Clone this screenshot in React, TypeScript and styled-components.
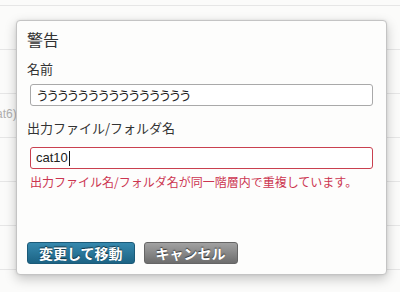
import React from "react";
import styled, { createGlobalStyle } from "styled-components";

const Global = createGlobalStyle`
  html, body { margin: 0; padding: 0; background: #fbfbfa; }
  body { font-family: "Noto Sans CJK JP", "Noto Sans", sans-serif; }
`;

const Page = styled.div`
  position: relative;
  width: 400px;
  height: 292px;
  overflow: hidden;
  background: #fbfbfa;
`;

const TopStrip = styled.div`
  height: 5px;
  border-bottom: 1px solid #e6e6e6;
`;

const Row = styled.div`
  height: 43px;
  border-bottom: 1px solid #e6e6e6;
  display: flex;
  align-items: center;
`;

const RowText = styled.span`
  margin-left: -14px;
  margin-top: -4px;
  font-family: "Liberation Sans", Arial, sans-serif;
  font-size: 12px;
  color: #b0b0b0;
`;

const Dialog = styled.div`
  position: absolute;
  left: 16px;
  top: 20px;
  width: 371px;
  height: 255px;
  box-sizing: border-box;
  background: #fdfdfc;
  border: 1px solid #c4c4c4;
  border-radius: 4px;
  box-shadow: 0 4px 12px rgba(0, 0, 0, 0.22), 0 0 3px rgba(0, 0, 0, 0.08);
  padding: 8px 13px 10px 10px;
  display: flex;
  flex-direction: column;
`;

const Title = styled.div`
  font-size: 16px;
  line-height: 20px;
  color: #333;
  margin-bottom: 11px;
`;

const Label = styled.div`
  font-size: 13px;
  line-height: 18px;
  color: #333;
`;

const Field = styled.div<{ $error?: boolean }>`
  box-sizing: border-box;
  margin: ${(p) => (p.$error ? "10px" : "6px")} 0 0 3px;
  width: 343px;
  height: 22px;
  border: 1px solid ${(p) => (p.$error ? "#c9404f" : "#a9a9a9")};
  border-radius: 3px;
  background: #fff;
  padding: 0 5px;
  display: flex;
  align-items: center;
  font-size: 13px;
  color: #222;
`;

const KanaText = styled.span`
  letter-spacing: -2.8px;
  line-height: 18px;
`;

const LatinText = styled.span`
  font-family: "Liberation Sans", Arial, sans-serif;
  font-size: 13px;
  line-height: 18px;
`;

const Caret = styled.span`
  display: inline-block;
  width: 1px;
  height: 15px;
  margin-left: 1px;
  background: #111;
`;

const SecondLabel = styled(Label)`
  margin-top: 13px;
`;

const ErrorText = styled.div`
  margin: 5px 0 0 3px;
  font-size: 12px;
  line-height: 16px;
  color: #cc3550;
`;

const Buttons = styled.div`
  margin-top: auto;
  display: flex;
  gap: 9px;
`;

const Button = styled.div<{ $variant: "primary" | "secondary" }>`
  box-sizing: border-box;
  height: 22px;
  padding: 0 11px;
  display: flex;
  align-items: center;
  border-radius: 3px;
  font-size: 14px;
  font-weight: 700;
  color: #fff;
  text-shadow: 0 -1px 1px rgba(0, 0, 0, 0.6);
  border: 1px solid ${(p) => (p.$variant === "primary" ? "#1b5a78" : "#656565")};
  background: ${(p) =>
    p.$variant === "primary"
      ? "linear-gradient(#3689ae, #1c6384)"
      : "linear-gradient(#a2a2a2, #6d6d6d)"};
`;

const nameValue = "ううううう" + "ううううう" + "ううううう";

export default function App() {
  return (
    <Page>
      <Global />
      <TopStrip />
      <Row />
      <Row />
      <Row>
        <RowText>(cat6)</RowText>
      </Row>
      <Row />
      <Row />
      <Row />
      <Dialog>
        <Title>警告</Title>
        <Label>名前</Label>
        <Field>
          <KanaText>{nameValue}</KanaText>
        </Field>
        <SecondLabel>出力ファイル/フォルダ名</SecondLabel>
        <Field $error>
          <LatinText>cat10</LatinText>
          <Caret />
        </Field>
        <ErrorText>出力ファイル名/フォルダ名が同一階層内で重複しています。</ErrorText>
        <Buttons>
          <Button $variant="primary">変更して移動</Button>
          <Button $variant="secondary">キャンセル</Button>
        </Buttons>
      </Dialog>
    </Page>
  );
}
